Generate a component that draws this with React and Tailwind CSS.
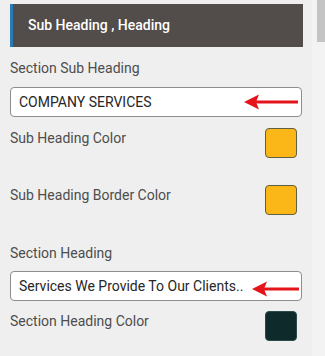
import React from 'react';

const font = { fontFamily: 'Roboto, "Liberation Sans", sans-serif' };

// red annotation arrow pointing left
const Arrow = ({ className, length }) => (
  <svg className={className} width={length} height="16" viewBox={`0 0 ${length} 16`}>
    <line x1="12" y1="8" x2={length - 1} y2="8" stroke="#e5141b" strokeWidth="3" />
    <polygon points="0,8 15,0.5 12,8 15,15.5" fill="#e5141b" />
  </svg>
);

const TextField = ({ value, arrowClass, arrowLength }) => (
  <div className="relative h-[30px] w-[292px] rounded-[4px] border border-[#8d8d8d] bg-white pl-2 flex items-center text-[14px] text-[#262626]">
    {value}
    <Arrow className={arrowClass} length={arrowLength} />
  </div>
);

const ColorRow = ({ label, color, border, className }) => (
  <div className={`flex items-start justify-between w-[287px] ${className}`}>
    <span className="text-[14px] leading-[20px] text-[#4d4d4d]">{label}</span>
    <div className="h-[30px] w-[32px] rounded-[4px] border" style={{ backgroundColor: color, borderColor: border }} />
  </div>
);

export default function App() {
  return (
    <div className="relative min-h-[356px] w-[325px] overflow-hidden bg-[#efefef]" style={font}>
      {/* scrollbar */}
      <div className="absolute right-0 top-0 h-full w-[13px] bg-[#f3f3f3]" />
      <div className="absolute right-0 top-0 h-[42px] w-[8px] bg-[#c4c4c4]" />

      <div className="pl-[10px] pt-[4px]">
        <div className="flex h-[43px] w-[293px] items-center border-l-[3px] border-[#2a7ab6] bg-[#524c4a] pl-[15px] text-[14px] font-medium text-white">
          Sub Heading , Heading
        </div>

        <div className="mt-[11px] text-[14px] leading-[20px] text-[#4d4d4d]">Section Sub Heading</div>
        <div className="mt-[9px]">
          <TextField value="COMPANY SERVICES" arrowClass="absolute left-[233px] top-[6px]" arrowLength={55} />
        </div>

        <ColorRow className="mt-[11px]" label="Sub Heading Color" color="#fbb617" border="#5e6144" />
        <ColorRow className="mt-[27px]" label="Sub Heading Border Color" color="#fbb617" border="#5e6144" />

        <div className="mt-[28px] text-[14px] leading-[20px] text-[#4d4d4d]">Section Heading</div>
        <div className="mt-[8px]">
          <TextField value="Services We Provide To Our Clients.." arrowClass="absolute left-[241px] top-[9px]" arrowLength={48} />
        </div>

        <ColorRow className="mt-[10px]" label="Section Heading Color" color="#0e2a2b" border="#2b4a4d" />
      </div>
    </div>
  );
}
